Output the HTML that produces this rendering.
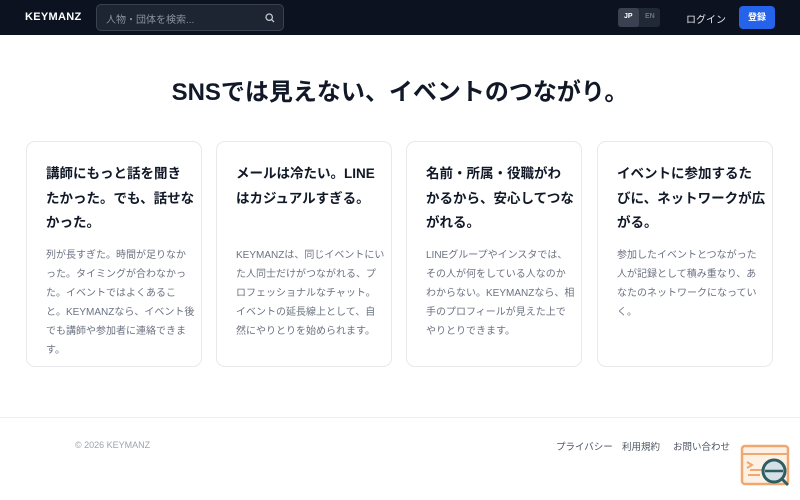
<!DOCTYPE html>
<html><head><meta charset="utf-8"><style>
*{margin:0;padding:0;box-sizing:border-box}
body{width:800px;height:500px;background:#fff;font-family:"Liberation Sans","Noto Sans CJK JP",sans-serif;position:relative;overflow:hidden}
.nav{position:absolute;left:0;top:0;width:800px;height:35px;background:#0c1220}
.logo{position:absolute;left:25px;top:11px;color:#fff;font-weight:bold;font-size:11px;letter-spacing:.3px}
.search{position:absolute;left:96px;top:4px;width:188px;height:27px;background:#1d2432;border:1px solid #3a4150;border-radius:5px;color:#8b92a0;font-size:10px;padding:6px 9px}
.lang{position:absolute;left:618px;top:8px;width:42px;height:19px;background:#222936;border-radius:3px;font-size:7px;font-weight:bold}
.lang span{position:absolute;top:5px}
.login{position:absolute;left:686px;top:11px;color:#e5e7eb;font-size:10px}
.reg{position:absolute;left:739px;top:6px;width:36px;height:23px;background:#2563eb;border-radius:4px;color:#fff;font-size:9px;font-weight:bold;text-align:center;line-height:23px}
h1{position:absolute;left:0;top:72px;width:800px;text-align:center;font-size:24px;font-weight:bold;color:#111827}
.card{position:absolute;top:141px;width:176px;height:226px;border:1px solid #e8e9ec;border-radius:9px;padding:20px 0 20px 19px;white-space:nowrap}
.card h2{font-size:13.5px;line-height:24.5px;font-weight:bold;color:#111827;height:84px}
.card p{font-size:10px;line-height:19px;color:#6b7280;margin-top:0}
.fline{position:absolute;left:0;top:417px;width:800px;border-top:1px solid #eceef1}
.copy{position:absolute;left:75px;top:440px;font-size:9px;color:#9ca3af}
.fl{position:absolute;top:439px;font-size:9.5px;color:#4b5563}
</style></head><body>
<div class="nav">
<div class="logo">KEYMANZ</div>
<div class="search">人物・団体を検索...
<svg style="position:absolute;right:8px;top:8px" width="10" height="10" viewBox="0 0 10 10"><circle cx="4.2" cy="4.2" r="3.2" fill="none" stroke="#c5c9d1" stroke-width="1.3"/><path d="M6.6 6.6L9 9" stroke="#c5c9d1" stroke-width="1.3"/></svg></div>
<div class="lang"><div style="position:absolute;left:0;top:0;width:21px;height:19px;background:#3a4252;border-radius:3px"></div><span style="left:6px;color:#fff">JP</span><span style="left:27px;color:#6b7280">EN</span></div>
<div class="login">ログイン</div>
<div class="reg">登録</div>
</div>
<h1>SNSでは見えない、イベントのつながり。</h1>
<div class="card" style="left:26px"><h2>講師にもっと話を聞き<br>たかった。でも、話せな<br>かった。</h2><p>列が長すぎた。時間が足りなか<br>った。タイミングが合わなかっ<br>た。イベントではよくあるこ<br>と。KEYMANZなら、イベント後<br>でも講師や参加者に連絡できま<br>す。</p></div>
<div class="card" style="left:216px"><h2>メールは冷たい。LINE<br>はカジュアルすぎる。</h2><p>KEYMANZは、同じイベントにい<br>た人同士だけがつながれる、プ<br>ロフェッショナルなチャット。<br>イベントの延長線上として、自<br>然にやりとりを始められます。</p></div>
<div class="card" style="left:406px"><h2>名前・所属・役職がわ<br>かるから、安心してつな<br>がれる。</h2><p>LINEグループやインスタでは、<br>その人が何をしている人なのか<br>わからない。KEYMANZなら、相<br>手のプロフィールが見えた上で<br>やりとりできます。</p></div>
<div class="card" style="left:597px"><h2>イベントに参加するた<br>びに、ネットワークが広<br>がる。</h2><p>参加したイベントとつながった<br>人が記録として積み重なり、あ<br>なたのネットワークになってい<br>く。</p></div>
<div class="fline"></div>
<div class="copy">© 2026 KEYMANZ</div>
<div class="fl" style="left:556px">プライバシー</div>
<div class="fl" style="left:622px">利用規約</div>
<div class="fl" style="left:673px">お問い合わせ</div>
<svg style="position:absolute;left:740px;top:444px" width="52" height="46" viewBox="0 0 52 46">
<rect x="2" y="2" width="46" height="38" rx="3" fill="#fdf0e4" stroke="#f0a870" stroke-width="2.5"/>
<line x1="2" y1="10" x2="48" y2="10" stroke="#f0a870" stroke-width="2"/>
<path d="M7 18l5 3-5 3M10 26h14M8 31h12" stroke="#f0a870" stroke-width="2" fill="none"/>
<circle cx="34" cy="27" r="11" fill="#d5e1e6" stroke="#2f5e62" stroke-width="3"/>
<line x1="25" y1="27" x2="43" y2="27" stroke="#2f5e62" stroke-width="2.5"/>
<line x1="42" y1="35" x2="48" y2="41" stroke="#2f5e62" stroke-width="3"/>
</svg>
</body></html>
